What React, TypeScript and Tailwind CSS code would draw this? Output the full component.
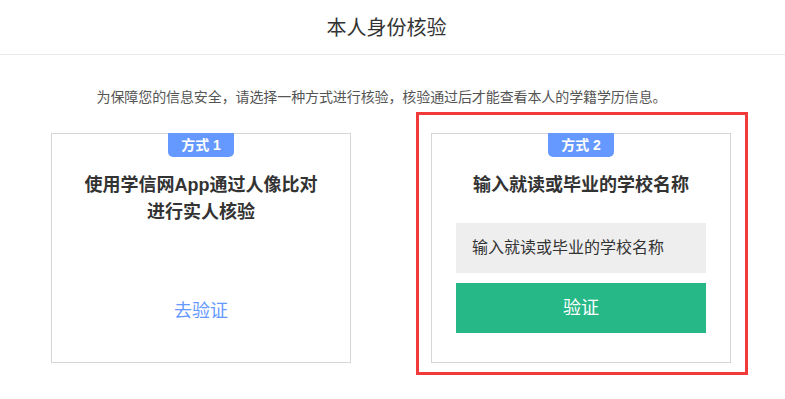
export default function App() {
  return (
    <div
      className="min-h-screen bg-white text-[#333]"
      style={{ fontFamily: '"Liberation Sans", "Noto Sans CJK SC", sans-serif' }}
    >
      {/* Header */}
      <div className="h-[55px] flex items-center justify-center border-b border-[#e8e8e8] pr-[12px]">
        <h1 className="text-[20px] leading-[28px] text-[#333] pt-[1px]">本人身份核验</h1>
      </div>

      {/* Description */}
      <p className="mt-[32px] pr-[22px] text-center text-[14px] leading-[20px] tracking-[-0.1px] text-[#555]">
        为保障您的信息安全，请选择一种方式进行核验，核验通过后才能查看本人的学籍学历信息。
      </p>

      {/* Cards */}
      <div className="pr-[3px]">
        <div className="mx-auto mt-[26px] w-[680px] grid grid-cols-[300px_300px] justify-between">
          {/* Method 1 */}
          <div className="flex flex-col items-center border border-[#d6d6d6]">
            <span className="w-[66px] h-[24px] bg-[#6699ff] rounded-b-[5px] text-center text-white text-[14px] font-bold leading-[24px] -mt-[1px]">
              方式 1
            </span>
            <h2 className="mt-[15px] text-center text-[18px] font-bold leading-[27px] text-[#333]">
              使用学信网App通过人像比对
              <br />
              进行实人核验
            </h2>
            <a href="#" className="mt-auto mb-[37px] text-[18px] leading-[27px] text-[#6699ff]">
              去验证
            </a>
          </div>

          {/* Method 2 */}
          <div className="relative">
            <div className="flex flex-col items-center border border-[#d6d6d6] px-[24px] pb-[29px]">
              <span className="w-[66px] h-[24px] bg-[#6699ff] rounded-b-[5px] text-center text-white text-[14px] font-bold leading-[24px] -mt-[1px]">
                方式 2
              </span>
              <h2 className="mt-[15px] text-center text-[18px] font-bold leading-[27px] text-[#333]">
                输入就读或毕业的学校名称
              </h2>
              <input
                className="mt-[24px] w-full h-[50px] bg-[#eeeeee] px-[16px] text-[16px] text-[#333] placeholder:text-[#333] outline-none"
                placeholder="输入就读或毕业的学校名称"
              />
              <button className="mt-[10px] w-full h-[50px] bg-[#26b887] text-white text-[18px]">验证</button>
            </div>
            {/* Highlight frame */}
            <div className="pointer-events-none absolute -left-[15px] -top-[21px] -right-[17px] -bottom-[12px] border-[3px] border-[#f23a3a]" />
          </div>
        </div>
      </div>
    </div>
  )
}
